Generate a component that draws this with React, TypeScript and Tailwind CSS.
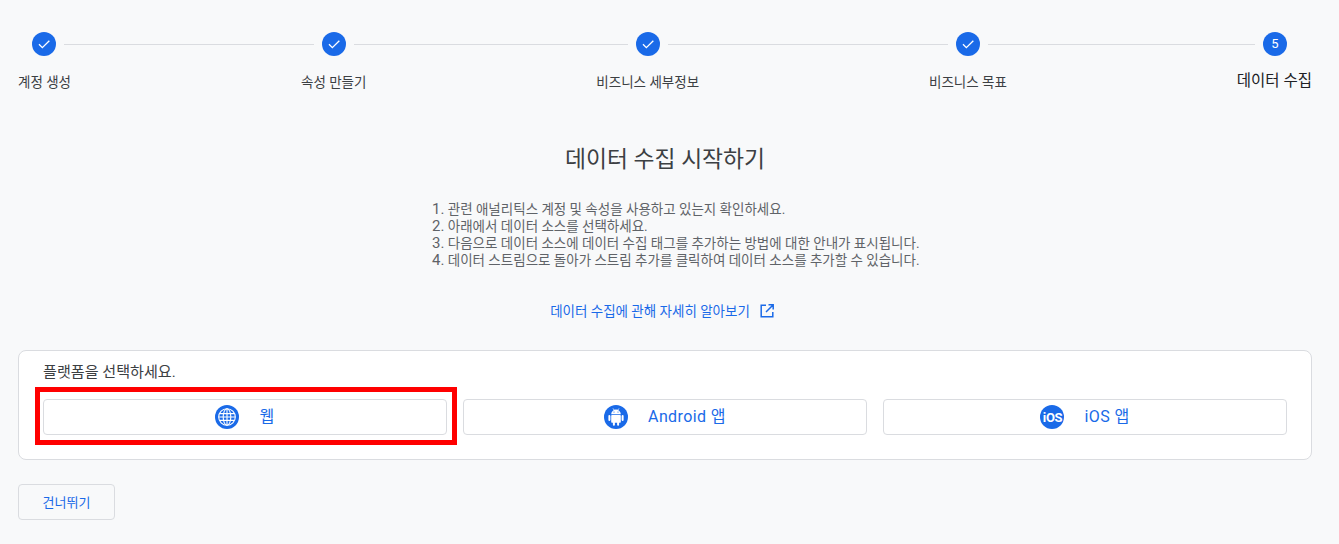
const font = "font-['Roboto','Noto_Sans_CJK_KR',sans-serif]";

function Check() {
  return (
    <span className="flex h-6 w-6 shrink-0 items-center justify-center rounded-full bg-[#1a6ae8]">
      <svg width="16" height="16" viewBox="0 0 24 24" fill="none" stroke="white" strokeWidth="2">
        <path d="M4.5 12.5l5 5L20 7" />
      </svg>
    </span>
  );
}

function Line({ w }: { w: string }) {
  return <span className={`mx-2 h-px shrink-0 bg-[#dadce0] ${w}`} />;
}

function Globe() {
  return (
    <svg width="24" height="24" viewBox="0 0 24 24" className="shrink-0">
      <circle cx="12" cy="12" r="12" fill="#1a6ae8" />
      <g fill="none" stroke="white" strokeWidth="1.1">
        <circle cx="12" cy="12" r="8.3" />
        <ellipse cx="12" cy="12" rx="3.8" ry="8.3" />
        <path d="M12 3.7v16.6M3.7 12h16.6M5 8.6h14M5 15.4h14" />
      </g>
    </svg>
  );
}

function Android() {
  return (
    <svg width="24" height="24" viewBox="0 0 24 24" className="shrink-0">
      <circle cx="12" cy="12" r="12" fill="#1a6ae8" />
      <g fill="white">
        <path d="M7.2 9.2a4.8 4.6 0 0 1 9.6 0z" />
        <rect x="7.2" y="9.9" width="9.6" height="7.8" rx="0.8" />
        <rect x="4.4" y="9.9" width="2" height="6" rx="1" />
        <rect x="17.6" y="9.9" width="2" height="6" rx="1" />
        <rect x="8.9" y="16.5" width="2" height="4.2" rx="1" />
        <rect x="13.1" y="16.5" width="2" height="4.2" rx="1" />
      </g>
      <path d="M9 3.4l1.2 1.8M15 3.4l-1.2 1.8" stroke="white" strokeWidth="0.7" />
      <circle cx="10" cy="7" r="0.6" fill="#1a6ae8" />
      <circle cx="14" cy="7" r="0.6" fill="#1a6ae8" />
    </svg>
  );
}

function Ios() {
  return (
    <span className="flex h-6 w-6 shrink-0 items-center justify-center rounded-full bg-[#1a6ae8] text-[13px] font-bold tracking-[-0.4px] text-white">
      iOS
    </span>
  );
}

function PlatformButton({ icon, label }: { icon: React.ReactNode; label: string }) {
  return (
    <button className="flex h-9 flex-1 items-center justify-center gap-5 rounded-[4px] border border-[#dadce0] bg-white text-[16px] font-normal tracking-[0.4px] text-[#1a6ae8]">
      {icon}
      <span>{label}</span>
    </button>
  );
}

function Item({ n, children }: { n: string; children: React.ReactNode }) {
  return (
    <li>
      <span className="text-[15px]">{n}.</span> {children}
    </li>
  );
}

export default function App() {
  return (
    <div className={`min-h-[544px] bg-[#f8f9fa] pt-8 pr-[27px] pl-[18px] text-[#3c4043] ${font}`}>
      <div className="flex items-center pl-[14px]">
        <Check />
        <Line w="w-[250px]" />
        <Check />
        <Line w="w-[274px]" />
        <Check />
        <Line w="w-[280px]" />
        <Check />
        <Line w="w-[267px]" />
        <span className="flex h-6 w-6 shrink-0 items-center justify-center rounded-full bg-[#1a6ae8] text-[13px] text-white">5</span>
      </div>
      <div className="mt-[15px] flex h-[22px] items-center justify-between text-[13.5px]">
        <span>계정 생성</span>
        <span>속성 만들기</span>
        <span>비즈니스 세부정보</span>
        <span>비즈니스 목표</span>
        <span className="text-[15.5px] text-[#202124]">데이터 수집</span>
      </div>

      <h1 className="mt-[53px] text-center text-[22.8px] leading-7 text-[#3c4043]">데이터 수집 시작하기</h1>

      <ol className="mt-[27px] ml-[414px] text-[13.5px] leading-[17px] text-[#5f6368]">
        <Item n="1">관련 애널리틱스 계정 및 속성을 사용하고 있는지 확인하세요.</Item>
        <Item n="2">아래에서 데이터 소스를 선택하세요.</Item>
        <Item n="3">다음으로 데이터 소스에 데이터 수집 태그를 추가하는 방법에 대한 안내가 표시됩니다.</Item>
        <Item n="4">데이터 스트림으로 돌아가 스트림 추가를 클릭하여 데이터 소스를 추가할 수 있습니다.</Item>
      </ol>

      <div className="mt-[32px] flex items-center justify-center gap-[9px] pr-[5px] text-[13.5px] text-[#1a6ae8]">
        <span>데이터 수집에 관해 자세히 알아보기</span>
        <svg width="16" height="16" viewBox="0 0 16 16" fill="none" stroke="currentColor" strokeWidth="1.5">
          <path d="M7 2.2H2.2v11.6h11.6V9M9.5 1.8h4.7v4.7M14 2L7 9" />
        </svg>
      </div>

      <section className="mt-[29px] h-[110px] rounded-lg border border-[#dadce0] bg-white px-6">
        <p className="pt-[9px] text-[15.1px] leading-[24px] text-[#3c4043]">플랫폼을 선택하세요.</p>
        <div className="relative mt-[15px] flex gap-4">
          <span className="absolute top-[-12px] left-[-8px] h-[58px] w-[422px] border-[5px] border-[#ff0000]" />
          <PlatformButton icon={<Globe />} label="웹" />
          <PlatformButton icon={<Android />} label="Android 앱" />
          <PlatformButton icon={<Ios />} label="iOS 앱" />
        </div>
      </section>

      <button className="mt-6 h-9 w-[97px] rounded-[4px] border border-[#dadce0] bg-transparent text-[13px] font-normal text-[#1a6ae8]">건너뛰기</button>
    </div>
  );
}
